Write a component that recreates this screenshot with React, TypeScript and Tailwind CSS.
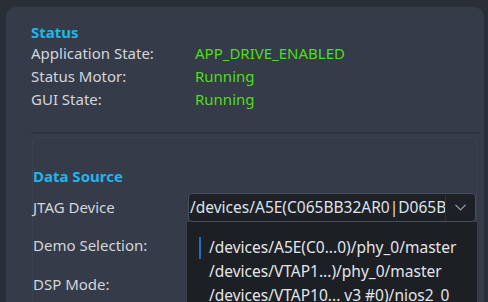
import { ChevronDown } from "lucide-react";

const statusRows = [
    { label: "Application State:", value: "APP_DRIVE_ENABLED" },
    { label: "Status Motor:", value: "Running" },
    { label: "GUI State:", value: "Running" },
];

const devices = [
    "/devices/A5E(C0...0)/phy_0/master",
    "/devices/VTAP1...)/phy_0/master",
    "/devices/VTAP10... v3 #0)/nios2_0",
];

export default function App() {
    return (
        <div className="w-[488px] h-[302px] overflow-hidden bg-[#2a2e37] pt-[7px] pl-[6px] pr-[4px] font-['Noto_Sans',sans-serif] text-[15px] text-[#d3d6dc]">
            <div className="h-[320px] rounded-[10px] bg-[#353b48] pl-[25px] pr-[4px] pt-[15px]">
                <h2 className="text-[15px] font-bold leading-[20px] text-[#1eb6ee]">Status</h2>
                <div className="flex flex-col">
                    {statusRows.map((row) => (
                        <div key={row.label} className="flex h-[23px] items-center">
                            <span className="w-[164px]">{row.label}</span>
                            <span className="text-[#4fde18]">{row.value}</span>
                        </div>
                    ))}
                </div>

                <div className="mt-[21px] h-[2px] bg-[#2f343f]" />

                <div className="relative mt-[3px] ml-[1px] mr-[3px] h-[200px] rounded-t-[4px] border border-[#3b414d] pt-[28px]">
                    <h2 className="text-[15px] font-bold leading-[20px] text-[#1eb6ee]">Data Source</h2>

                    <div className="mt-[7px] flex h-[29px] items-center">
                        <span className="w-[155px]">JTAG Device</span>
                        <div className="flex h-[29px] flex-1 items-center overflow-hidden rounded-[4px] border border-[#474d5a] bg-[#1d2026]">
                            <span className="flex-1 overflow-hidden whitespace-nowrap pl-[1px] text-[15.5px] text-[#dfe2e7]">/devices/A5E(C065BB32AR0|D065B</span>
                            <div className="flex h-full w-[30px] items-center justify-center border-l border-[#2c3038]">
                                <ChevronDown size={19} strokeWidth={1.5} className="text-[#9ba1ab]" />
                            </div>
                        </div>
                    </div>

                    <div className="mt-[13px] flex h-[20px] items-center">
                        <span>Demo Selection:</span>
                    </div>
                    <div className="mt-[19px] flex h-[20px] items-center">
                        <span>DSP Mode:</span>
                    </div>

                    <div className="absolute left-[154px] right-[-1px] top-[84px] h-[120px] bg-[#1c1f24] pl-[12px] pt-[14px]">
                        {devices.map((d, i) => (
                            <div key={d} className="flex h-[24px] items-center">
                                <div className={i === 0 ? "h-[22px] w-[2px] bg-[#1d6fc0]" : "h-[22px] w-[2px]"} />
                                <span className="ml-[8px] whitespace-nowrap text-[15.5px] text-[#e3e5ea]">{d}</span>
                            </div>
                        ))}
                    </div>
                </div>
            </div>
        </div>
    );
}
